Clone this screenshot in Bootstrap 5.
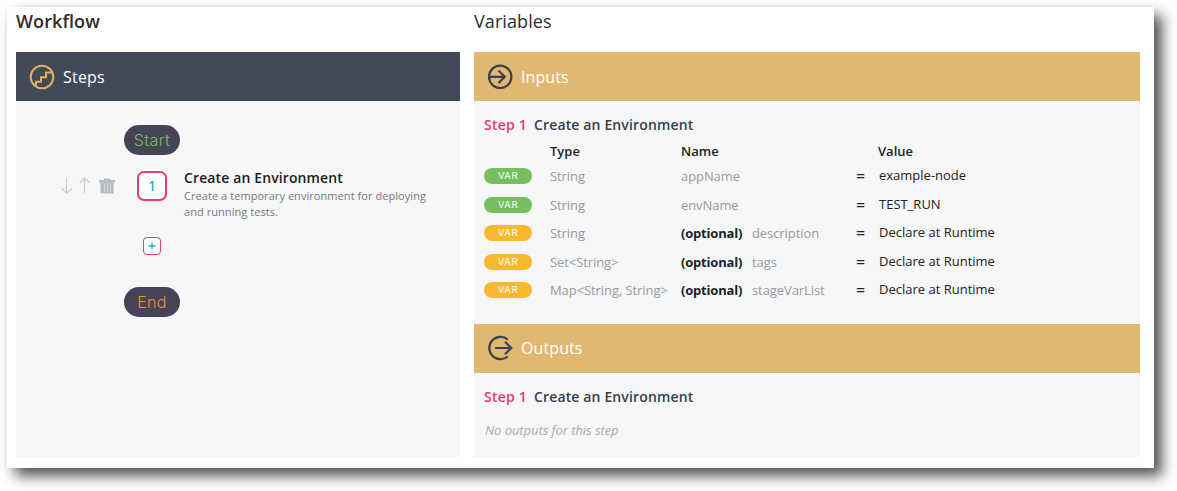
<!DOCTYPE html>
<html lang="en">
<head>
<meta charset="utf-8">
<meta name="viewport" content="width=device-width, initial-scale=1">
<title>Workflow</title>
<link href="https://cdn.jsdelivr.net/npm/bootstrap@5.3.0/dist/css/bootstrap.min.css" rel="stylesheet">
<style>
body{font-family:"Open Sans","Noto Sans",sans-serif;font-size:13px;line-height:18px;color:#222;background:#fff;height:491px;overflow:hidden}
.window{width:1147px;height:461px;margin:7px 0 0 7px;padding:0 14px 11px 9px;gap:14px;box-shadow:8px 8px 13px 0 rgba(0,0,0,.68),0 0 3px rgba(0,0,0,.05)}
.col-steps{width:444px}
.col-vars{width:666px}
.heading{font-size:18px;line-height:28px;height:45px;margin:0;font-weight:400;color:#2d2d2d;letter-spacing:.08px}
.heading.strong{font-weight:600}
.bar{height:49px;padding-left:13px;gap:8px;color:#fff;font-size:16px}
.bar-dark{background:#414a56}
.bar-dark span{letter-spacing:.2px}
.bar-gold{background:#e0b870}
.bar-gold span{letter-spacing:.1px}
.bar-out{padding-bottom:1px}
.panel{background:#f5f7f9}
.flow{padding-top:24px}
.pill-node{width:56px;height:30px;margin-left:108px;border-radius:15px;background:#454457;font-family:Inter,sans-serif;font-size:16px;font-weight:350;letter-spacing:.35px}
.go{color:#74bf61}
.stop{color:#f0921f}
.step-row{height:49px;margin-top:14px;padding-left:45px}
.tools{width:76px;padding-top:7px}
.step-no{width:30px;height:30px;margin-top:2px;border:2px solid #e83e67;border-radius:7px;background:#fff;color:#1babe2;font-size:14px;font-weight:500;font-family:"Noto Sans",sans-serif}
.step-copy{margin-left:17px}
.step-name{font-size:14px;font-weight:600;line-height:18px;color:#1c1c1c;letter-spacing:.12px}
.step-desc{font-size:11px;line-height:16px;padding-top:1px;color:#777;width:260px;letter-spacing:.06px}
.plus{width:18px;height:18px;margin:19px 0 32px 127px;border:1px solid #e83e67;border-radius:4px;background:#fff}
.step-title{font-size:14px;font-weight:600;color:#373d4d;gap:7px;padding-left:10px;line-height:20px;letter-spacing:.14px}
.pink{color:#e83e67;letter-spacing:.22px}
.inputs{height:223px;padding-top:14px}
.outputs{padding-top:14px}
.vars{display:grid;grid-template-columns:66px 131px 175px 23px 1fr;grid-template-rows:24px repeat(5,28.5px);padding:7px 0 0 10px;align-items:start}
.vars .h{font-weight:600;color:#222}
.vars .h-value{margin-left:-1px}
.g{color:#999}
.vars .t{margin-top:1px;letter-spacing:-.08px}
.opt{font-weight:700;width:71px;letter-spacing:-.2px}
.eq{font-size:16px;margin-top:1px}
.tag{width:48px;height:16px;border-radius:8px;color:#fff;font-size:9.5px;margin-top:2.4px;font-family:Inter,sans-serif;letter-spacing:.5px}
.tag-g{background:#76be60}
.tag-y{background:#f8b932}
.none{font-style:italic;color:#aaa;padding:14px 0 0 11px;letter-spacing:-.06px}
</style>
</head>
<body>
<main class="window d-flex bg-white">
  <section class="col-steps d-flex flex-column flex-shrink-0">
    <h1 class="heading strong">Workflow</h1>
    <div class="bar bar-dark d-flex align-items-center">
      <svg width="26" height="26" viewBox="0 0 26 26" fill="none" stroke="#e0b15c" stroke-width="2"><circle cx="13" cy="13" r="11.3"/><path d="M7 22.500V17.700H12V13.300H17V8.500H23.500"/></svg>
      <span>Steps</span>
    </div>
    <div class="panel flow flex-grow-1">
      <div class="pill-node go d-flex align-items-center justify-content-center">Start</div>
      <div class="step-row d-flex align-items-start">
        <div class="tools d-flex">
          <svg width="58" height="20" viewBox="0 0 58 20" fill="none" stroke="#ccc"><path stroke-width="1.200" d="M5.500 1.500v15.500M1 12.500l4.500 4.500 5-4.500M23.500 17.500V2M19 6.500L23.500 2l5 4.500"/><path fill="#b8bcc0" stroke="none" d="M38 4h5V2.500h6V4h5v2.500h-1.500v11h-13v-11H38z"/><path stroke="#cbd6e4" stroke-width="1.200" d="M43.500 7.500V16M46.500 7.500V16M49.500 7.500V16"/></svg>
        </div>
        <div class="step-no d-flex align-items-center justify-content-center flex-shrink-0">1</div>
        <div class="step-copy">
          <div class="step-name">Create an Environment</div>
          <div class="step-desc">Create a temporary environment for deploying<br>and running tests.</div>
        </div>
      </div>
      <div class="plus d-flex align-items-center justify-content-center"><svg width="8" height="8" viewBox="0 0 8 8" stroke="#1babe2" stroke-width="1.300"><path d="M4 .5v7M.5 4h7"/></svg></div>
      <div class="pill-node stop d-flex align-items-center justify-content-center">End</div>
    </div>
  </section>
  <section class="col-vars d-flex flex-column flex-shrink-0">
    <h2 class="heading">Variables</h2>
    <div class="bar bar-gold d-flex align-items-center">
      <svg width="26" height="26" viewBox="0 0 26 26" fill="none" stroke="#3b4150" stroke-width="2.200"><circle cx="13.200" cy="12.800" r="11.200"/><path d="M2 12.800H18M11.500 6.500l6.300 6.300-6.300 6.300"/></svg>
      <span>Inputs</span>
    </div>
    <div class="panel inputs">
      <div class="step-title d-flex"><span class="pink">Step 1</span><span>Create an Environment</span></div>
      <div class="vars">
        <span></span><span class="h">Type</span><span class="h">Name</span><span></span><span class="h h-value">Value</span>
        <span class="tag tag-g d-flex align-items-center justify-content-center">VAR</span><span class="g t">String</span><span class="g t">appName</span><span class="eq">=</span><span>example-node</span>
        <span class="tag tag-g d-flex align-items-center justify-content-center">VAR</span><span class="g t">String</span><span class="g t">envName</span><span class="eq">=</span><span>TEST_RUN</span>
        <span class="tag tag-y d-flex align-items-center justify-content-center">VAR</span><span class="g t">String</span><span class="t d-flex"><b class="opt">(optional)</b><span class="g">description</span></span><span class="eq">=</span><span>Declare at Runtime</span>
        <span class="tag tag-y d-flex align-items-center justify-content-center">VAR</span><span class="g t">Set&lt;String&gt;</span><span class="t d-flex"><b class="opt">(optional)</b><span class="g">tags</span></span><span class="eq">=</span><span>Declare at Runtime</span>
        <span class="tag tag-y d-flex align-items-center justify-content-center">VAR</span><span class="g t text-nowrap">Map&lt;String, String&gt;</span><span class="t d-flex"><b class="opt">(optional)</b><span class="g">stageVarList</span></span><span class="eq">=</span><span>Declare at Runtime</span>
      </div>
    </div>
    <div class="bar bar-gold bar-out d-flex align-items-center">
      <svg width="26" height="26" viewBox="0 0 26 26" fill="none" stroke="#3b4150" stroke-width="2.200"><path d="M20.800 4.500A11.200 11.200 0 1 0 20.800 21.500M8 13h16.500M18 6.700l6.300 6.300-6.300 6.300"/></svg>
      <span>Outputs</span>
    </div>
    <div class="panel outputs flex-grow-1">
      <div class="step-title d-flex"><span class="pink">Step 1</span><span>Create an Environment</span></div>
      <div class="none">No outputs for this step</div>
    </div>
  </section>
</main>
<script src="https://cdn.jsdelivr.net/npm/bootstrap@5.3.0/dist/js/bootstrap.bundle.min.js"></script>
</body>
</html>
